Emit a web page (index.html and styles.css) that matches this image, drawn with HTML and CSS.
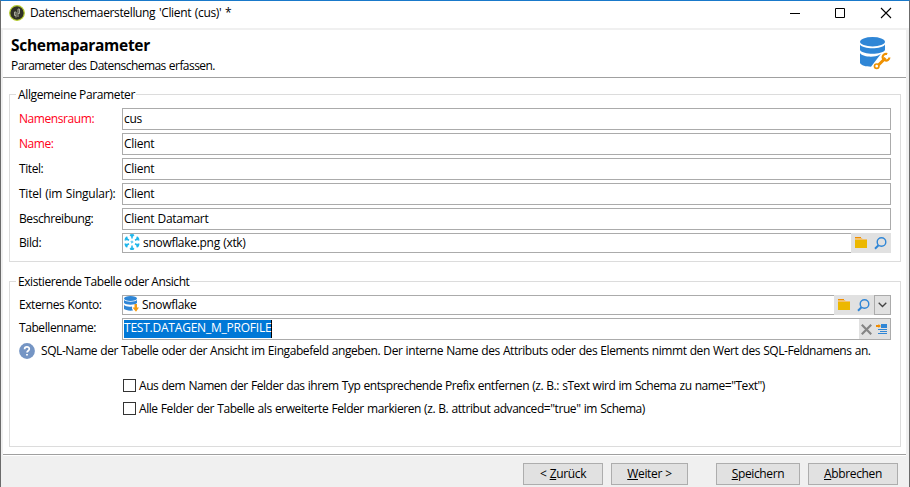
FILE: index.html
```html
<!DOCTYPE html>
<html lang="de">
<head>
<meta charset="utf-8">
<title>Datenschemaerstellung</title>
<link rel="stylesheet" href="styles.css">
</head>
<body>
<svg width="0" height="0" class="defs">
  <symbol id="folder" viewBox="0 0 12 12"><path d="M0 0h6v1H0z" fill="#f08c00"/><path d="M0 1h7l.5 1H12v1H0z" fill="#f3c169"/><path d="M0 3h12v8H0z" fill="#ecb800"/></symbol>
  <symbol id="search" viewBox="0 0 13 13"><circle cx="7.500" cy="5" r="4.300" fill="none" stroke="#2f86d6" stroke-width="1.400"/><path d="M4.500 8.200 1 11.700" stroke="#2f86d6" stroke-width="2"/></symbol>
</svg>
<div class="window">
  <header class="titlebar">
    <svg class="app" width="16" height="16" viewBox="0 0 16 16"><circle cx="8" cy="8" r="7.300" fill="#2f3026" stroke="#b5cc2e" stroke-width="1.200"/><path d="M9 12V4h1.500v4.500H9M7 12.500V7H5.500v3.500H7" fill="none" stroke="#a9aa9a" stroke-width="1"/></svg>
    <span class="caption">Datenschemaerstellung 'Client (cus)' *</span>
    <svg class="controls" width="103" height="12" viewBox="0 0 103 12" fill="none" stroke="#000"><path d="M0 6.500h10"/><path d="M45.500 1.500h9v9h-9z"/><path d="M91 1l10 10M101 1 91 11" stroke-width="1.100"/></svg>
  </header>
  <div class="page">
    <div class="head">
      <div>
        <h1>Schemaparameter</h1>
        <p>Parameter des Datenschemas erfassen.</p>
      </div>
      <svg width="31" height="33" viewBox="0 0 31 33"><g fill="#2f86d6"><ellipse cx="12.500" cy="4.700" rx="12.500" ry="4.700"/><path d="M0 7.500C3 12.500 22 12.500 25 7.500V13C22 18 3 18 0 13z"/><path d="M0 16C3 20.500 15 20.500 19 18l2-1.300L11 29.700C6 29.600 1 28.500 0 26z"/></g><path d="M17 29.500 26 20.500" stroke="#fff" stroke-width="7"/><path d="M18.500 28 25.500 21" stroke="#ef9100" stroke-width="3"/><circle cx="16.700" cy="29.200" r="2.200" fill="#fff" stroke="#ef9100" stroke-width="1.700"/><path d="M27.200 17A3.400 3.400 0 1 0 29.400 20.500" fill="none" stroke="#ef9100" stroke-width="2.200"/></svg>
    </div>
    <main class="body">
      <section class="group general">
        <h2><span>Allgemeine Parameter</span></h2>
        <div class="row"><label class="required">Namensraum:</label><div class="field">cus</div></div>
        <div class="row"><label class="required">Name:</label><div class="field">Client</div></div>
        <div class="row"><label>Titel:</label><div class="field">Client</div></div>
        <div class="row"><label class="sing">Titel (im Singular):</label><div class="field">Client</div></div>
        <div class="row"><label>Beschreibung:</label><div class="field">Client Datamart</div></div>
        <div class="row low"><label>Bild:</label>
          <div class="field pick"><svg width="16" height="16" viewBox="-8 -8 16 16" fill="none" stroke="#1fb5ea" stroke-width="1.500"><g id="arm"><path d="M0-8V-3.500M-1.900-7.400 0-5.500 1.900-7.400"/></g><use href="#arm" transform="rotate(60)"/><use href="#arm" transform="rotate(120)"/><use href="#arm" transform="rotate(180)"/><use href="#arm" transform="rotate(240)"/><use href="#arm" transform="rotate(300)"/><path d="M0-1.200 1.200 0 0 1.200-1.200 0z" stroke-width=".8"/></svg><span class="value">snowflake.png (xtk)</span></div>
          <div class="tools"><svg width="12" height="12"><use href="#folder"/></svg><svg width="13" height="13"><use href="#search"/></svg></div>
        </div>
      </section>
      <section class="group table">
        <h2><span>Existierende Tabelle oder Ansicht</span></h2>
        <div class="row low"><label>Externes Konto:</label>
          <div class="field pick"><svg width="15" height="16" viewBox="0 0 15 16"><g fill="#2f86d6"><ellipse cx="6.500" cy="2.500" rx="6.500" ry="2.500"/><path d="M0 4C2 6.300 11 6.300 13 4V7C11 9.300 2 9.300 0 7z"/><path d="M0 9C2 11 6 10.800 8 10.500V12.500l1 2C5 15 1 14 0 13z"/></g><path d="M10.500 8h2.500v3.500H15L12 15.800 8.500 11.500h2z" fill="#f39b13"/></svg><span class="value">Snowflake</span></div>
          <div class="tools"><svg width="12" height="12"><use href="#folder"/></svg><svg width="13" height="13"><use href="#search"/></svg></div>
          <div class="drop"><svg width="9" height="6" viewBox="0 0 9 6"><path d="M.7.700 4.500 4.500 8.300.700" fill="none" stroke="#444" stroke-width="1.300"/></svg></div>
        </div>
        <div class="row name"><label>Tabellenname:</label>
          <div class="field entry"><span class="selection">TEST.DATAGEN_M_PROFILE</span><div class="inset"><svg width="11" height="11" viewBox="0 0 11 11"><path d="M.8.800l9.400 9.400M10.200.800.800 10.200" stroke="#858585" stroke-width="2.200"/></svg><svg width="11" height="11" viewBox="0 0 11 11"><path d="M5 0h6v4H5zM2 5h9v1H2zM4 7h7v1H4zM2 9h9v1H2z" fill="#2f86d6"/><path d="M0 1h2.500V0L5 2 2.500 4V3H0z" fill="#f08c00"/></svg></div></div>
        </div>
        <div class="hint"><svg width="16" height="16" viewBox="0 0 16 16"><circle cx="8" cy="8" r="7.900" fill="#7595c4"/><path d="M5.600 6.200C5.600 3.100 10.400 3.200 10.300 6 10.300 7.700 8 7.800 8 9.600" fill="none" stroke="#fff" stroke-width="1.700"/><path d="M7.100 10.900h1.800v1.700H7.100z" fill="#fff"/></svg><span class="hinttext">SQL-Name der Tabelle oder der Ansicht im Eingabefeld angeben. Der interne Name des Attributs oder des Elements nimmt den Wert des SQL-Feldnamens an.</span></div>
        <div class="check first"><i></i><span>Aus dem Namen der Felder das ihrem Typ entsprechende Prefix entfernen (z. B.: sText wird im Schema zu name="Text")</span></div>
        <div class="check second"><i></i><span>Alle Felder der Tabelle als erweiterte Felder markieren (z. B. attribut advanced="true" im Schema)</span></div>
      </section>
    </main>
  </div>
  <footer>
    <div class="button back"><span>&lt; <u>Z</u>urück</span></div>
    <div class="button next"><span><u>W</u>eiter &gt;</span></div>
    <div class="button save"><span><u>S</u>peichern</span></div>
    <div class="button cancel"><span><u>A</u>bbrechen</span></div>
  </footer>
</div>
</body>
</html>
```
FILE: styles.css
```css
* { box-sizing: border-box; }
body { margin: 0; color: #000; font: 12px/16px "Open Sans", "Noto Sans", sans-serif; letter-spacing: -0.43px; word-spacing: 0.5px; white-space: nowrap; overflow: hidden; }
svg { display: block; flex: none; }
.defs { display: none; }
h1, h2, p { margin: 0; }
.window { height: 487px; display: flex; flex-direction: column; background: #f0f0f0; border: 1px solid #6b6b6b; border-top-color: #1979ca; border-bottom: 0; }
.titlebar { height: 27px; display: flex; align-items: center; padding: 0 16px 4px 8px; background: #fff; flex: none; }
.caption { margin-left: 5px; letter-spacing: -0.36px; word-spacing: 1px; }
.controls { margin-left: auto; }
.page { margin: 2px 3px 0 2px; height: 425px; background: #fff; border-bottom: 1px solid #a0a0a0; box-shadow: 0 1px #fff; flex: none; }
.head { height: 48px; display: flex; justify-content: space-between; padding: 7px 15px 0 8px; border-bottom: 1px solid #a0a0a0; }
h1 { font-size: 15.500px; line-height: 17px; font-weight: 700; letter-spacing: -0.29px; }
.head p { margin-top: 4px; letter-spacing: -0.55px; word-spacing: 0.5px; }
.body { padding: 16px 5px 0 6px; }
.group { border: 1px solid #dcdcdc; padding-right: 9px; }
.general { height: 168px; }
.table { height: 166px; margin-top: 19px; }
h2 { height: 13px; font: inherit; margin: 0 0 0 6px; letter-spacing: -0.36px; word-spacing: 0; }
h2 span { display: inline-block; background: #fff; padding: 0 1px 0 2px; position: relative; top: -8px; }
.table h2 { letter-spacing: -0.43px; }
.row { display: flex; height: 22px; margin-bottom: 3px; padding-left: 9px; }
.row label { width: 103px; line-height: 22px; flex: none; letter-spacing: -0.42px; }
.row .sing { letter-spacing: -0.24px; word-spacing: 0.8px; }
.row .required { color: #ff0018; }
.field { flex: 1; border: 1px solid #ababab; padding-left: 1px; line-height: 19px; letter-spacing: -0.3px; }
.low { height: 20px; }
.row.low label { line-height: 19px; }
.pick { display: flex; align-items: flex-start; border-right: 0; line-height: 17px; }
.value { margin-left: 3px; }
.tools { display: flex; width: 40px; padding: 4px 4px 0; justify-content: space-between; background: #e1e1e1; }
.drop { width: 17px; border: 1px solid #ababab; background: #e1e1e1; display: flex; align-items: center; justify-content: center; }
.name { margin-bottom: 3px; }
.row.name label { line-height: 20px; }
.entry { display: flex; justify-content: space-between; }
.selection { height: 18px; margin-top: 1px; line-height: 16px; background: #0078d7; color: #fff; border-right: 1px solid #000; letter-spacing: -0.22px; }
.inset { width: 31px; display: flex; gap: 4px; padding: 5px 2px; background: #e1e1e1; }
.hint { display: flex; padding-left: 9px; height: 16px; }
.hinttext { margin-left: 6px; }
.check { display: flex; align-items: center; height: 16px; margin-left: 113px; }
.check i { width: 13px; height: 13px; border: 1px solid #333; margin-right: 3px; }
.check span { padding-top: 1px; }
.first { margin-top: 18px; }
.first span { letter-spacing: -0.46px; }
.second { margin-top: 7px; }
footer { display: flex; padding: 8px 11px 0 0; justify-content: flex-end; }
.button { height: 22px; border: 1px solid #adadad; background: #e1e1e1; text-align: center; line-height: 20px; letter-spacing: -0.35px; }
.back { width: 80px; margin-right: 8px; }
.next { width: 77px; margin-right: 28px; }
.save { width: 84px; margin-right: 8px; }
.cancel { width: 90px; }
```
